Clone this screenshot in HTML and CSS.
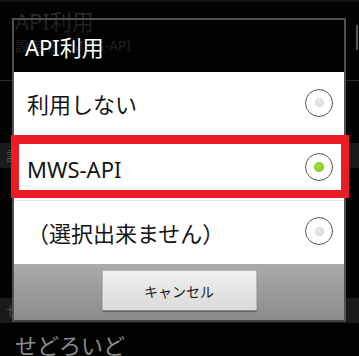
FILE: index.html
```html
<!DOCTYPE html>
<html lang="ja">
<head>
<meta charset="utf-8">
<title>API利用</title>
<link rel="stylesheet" href="styles.css">
</head>
<body>
<div class="screen">
  <div class="bg-top"></div>
  <div class="bg-pref">
    <div class="bg-title">API利用</div>
    <div class="bg-sub">設定値：MWS-API</div>
  </div>
  <div class="bg-sep"></div>
  <div class="bg-gap1"></div>
  <div class="bg-band">設</div>
  <div class="bg-gap2"></div>
  <div class="bg-band">せ</div>
  <div class="bg-name">せどろいど</div>
  <div class="scroll-ind"></div>

  <div class="dialog">
    <div class="dlg-title">API利用</div>
    <div class="dlg-list">
      <div class="row">
        <span class="row-label">利用しない</span>
        <span class="radio"></span>
      </div>
      <div class="row">
        <span class="row-label">MWS-API</span>
        <span class="radio checked"></span>
      </div>
      <div class="row">
        <span class="row-label">（選択出来ません）</span>
        <span class="radio"></span>
      </div>
    </div>
    <div class="dlg-bar">
      <button class="btn">キャンセル</button>
    </div>
  </div>

  <div class="highlight"></div>
</div>
</body>
</html>
```

FILE: styles.css
```css
html, body {
  margin: 0;
  padding: 0;
  background: #030303;
}
body {
  width: 359px;
  height: 356px;
  overflow: hidden;
  font-family: "Noto Sans", "Noto Sans CJK JP", sans-serif;
}
.screen {
  position: relative;
  width: 359px;
  height: 356px;
  overflow: hidden;
}
.bg-top {
  height: 2px;
  background: #161616;
}
.bg-pref {
  height: 78px;
  padding: 5px 0 0 15px;
  box-sizing: border-box;
  color: #292929;
}
.bg-title {
  font-size: 22px;
  line-height: 28px;
}
.bg-sub {
  font-size: 14px;
  line-height: 18px;
  margin-top: 2px;
}
.bg-sep {
  height: 1px;
  background: #2a2a2a;
}
.bg-gap1 { height: 62px; }
.bg-gap2 { height: 130px; }
.bg-band {
  height: 25px;
  background: #1a1a1a;
  color: #4a4a4a;
  font-size: 14px;
  line-height: 25px;
  padding-left: 6px;
}
.bg-name {
  margin-top: 8px;
  padding-left: 15px;
  font-size: 22px;
  line-height: 28px;
  color: #8a8a8a;
}
.scroll-ind {
  position: absolute;
  right: 1px;
  top: 25px;
  width: 2px;
  height: 25px;
  background: #555;
}

.dialog {
  position: absolute;
  left: 12px;
  top: 18px;
  width: 334px;
  border: 2px solid #505050;
  border-bottom-color: #444;
  box-sizing: border-box;
  display: flex;
  flex-direction: column;
}
.dlg-title {
  height: 52px;
  display: flex;
  align-items: center;
  padding-left: 11px;
  font-size: 22px;
  color: #fff;
  background: rgba(0, 0, 0, 0.2);
}
.dlg-list {
  background: #fff;
  display: flex;
  flex-direction: column;
}
.row {
  height: 64px;
  display: flex;
  align-items: center;
  justify-content: space-between;
  padding: 0 11px 0 13px;
  box-sizing: border-box;
  border-top: 1px solid #e6e6e6;
}
.row:first-child {
  border-top: none;
}
.row-label {
  font-size: 22px;
  line-height: 30px;
  color: #141414;
}
.radio {
  position: relative;
  width: 28px;
  height: 28px;
  border: 1.5px solid #555;
  border-radius: 50%;
  box-sizing: border-box;
  margin-top: -3px;
  background: #fff;
}
.radio::after {
  content: "";
  position: absolute;
  left: 50%;
  top: 50%;
  width: 9px;
  height: 9px;
  margin: -4.5px 0 0 -4.5px;
  border-radius: 50%;
  background: radial-gradient(circle at 45% 40%, #ececec, #cfcfcf);
}
.radio.checked::after {
  width: 10px;
  height: 10px;
  margin: -5px 0 0 -5px;
  background: radial-gradient(circle at 45% 40%, #a6e23c, #72bd1c);
}
.dlg-bar {
  height: 56px;
  background: linear-gradient(#ababab, #8b8b8b);
  display: flex;
  justify-content: center;
  align-items: flex-start;
  padding-top: 6px;
  box-sizing: border-box;
}
.btn {
  width: 155px;
  height: 41px;
  border: 1px solid #b8b8b8;
  border-bottom-color: #8a8a8a;
  border-radius: 2px;
  background: linear-gradient(#f0f0f0, #dadada);
  box-shadow: 0 1px 1px rgba(0, 0, 0, 0.35);
  font-family: "Noto Sans CJK JP", sans-serif;
  font-size: 14px;
  color: #1a1a1a;
  padding: 0;
}

.highlight {
  position: absolute;
  left: 11px;
  top: 135px;
  width: 338px;
  height: 63px;
  box-sizing: border-box;
  border: 8px solid #ec1c24;
  border-top-width: 9px;
}
```
